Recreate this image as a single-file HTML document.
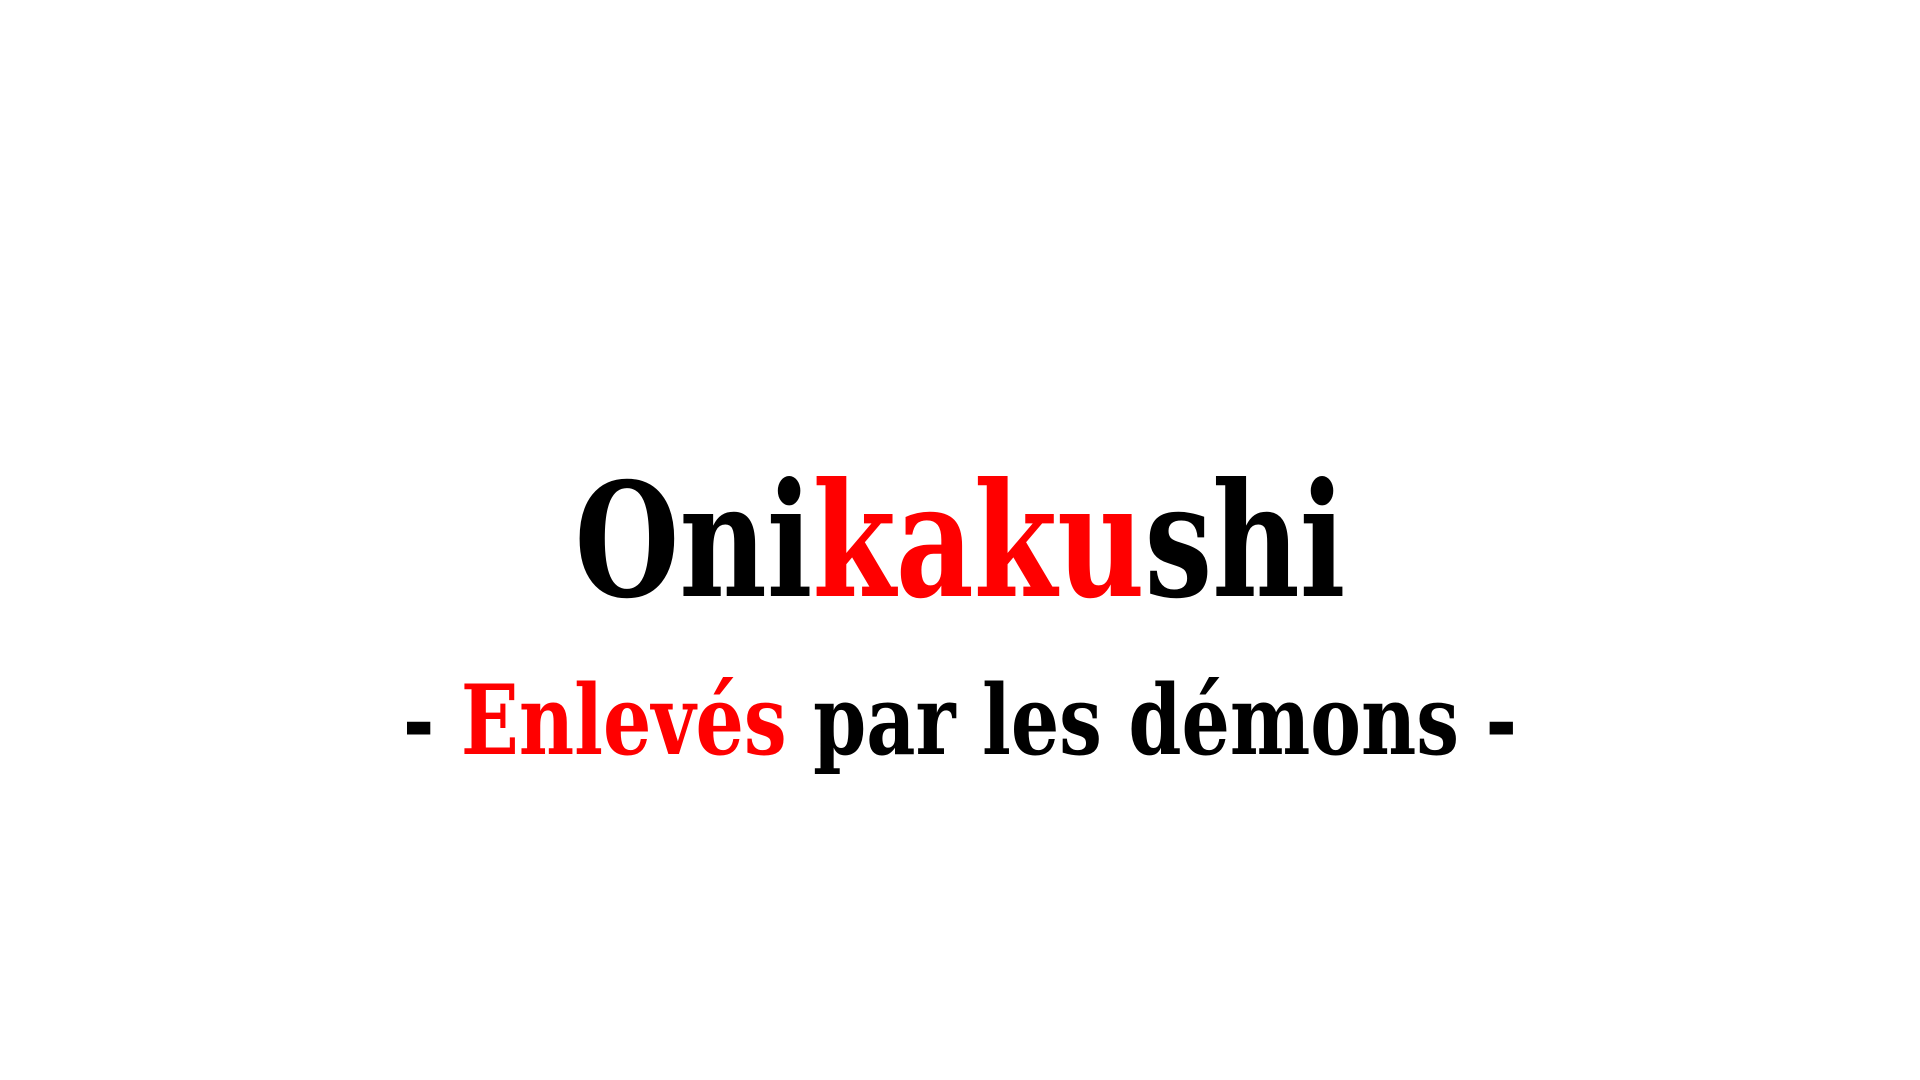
<!DOCTYPE html>
<html><head><meta charset="utf-8"><style>
html,body{margin:0;padding:0;background:#fff;width:1920px;height:1080px;overflow:hidden}
.t{position:absolute;left:0;width:1920px;text-align:center;font-family:"DejaVu Serif Condensed","DejaVu Serif","Liberation Serif",serif;font-weight:bold;font-stretch:condensed;white-space:nowrap;line-height:1}
.r{color:#ff0000}
#a{top:463px;font-size:158px;color:#000;transform:scaleX(0.846)}
#b{top:673px;font-size:96px;color:#000;transform:scaleX(0.88)}
</style></head><body>
<div class="t" id="a">Oni<span class="r">kaku</span>shi</div>
<div class="t" id="b">- <span class="r">Enlevés</span> par les démons -</div>
</body></html>
